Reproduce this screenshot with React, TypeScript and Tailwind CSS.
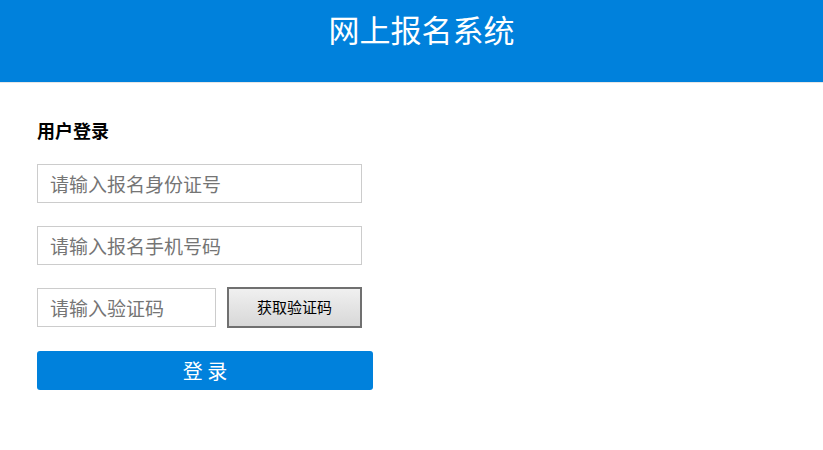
export default function App() {
  const font = { fontFamily: '"Microsoft YaHei", "Noto Sans CJK SC", "Liberation Sans", sans-serif' };
  return (
    <div className="w-[823px] h-[450px] bg-white" style={font}>
      <div className="h-[83px] bg-[#0081dc] border-b border-[#e6e6e6] flex justify-center pl-[20px]">
        <h1 className="text-white text-[31px] leading-none pt-[13px] font-normal">网上报名系统</h1>
      </div>
      <div className="pl-[37px] pt-[35px]">
        <div className="text-[18px] font-bold text-black leading-[24px]">用户登录</div>
        <div className="mt-[22px] flex flex-col gap-[23px]">
          <input
            className="w-[325px] h-[39px] border border-[#cccccc] px-[12px] text-[19px] text-black outline-none placeholder:text-[#757575]"
            placeholder="请输入报名身份证号"
          />
          <input
            className="w-[325px] h-[39px] border border-[#cccccc] px-[12px] text-[19px] text-black outline-none placeholder:text-[#757575]"
            placeholder="请输入报名手机号码"
          />
          <div className="flex items-start gap-[11px]">
            <input
              className="w-[179px] h-[39px] border border-[#cccccc] px-[12px] text-[19px] text-black outline-none placeholder:text-[#757575]"
              placeholder="请输入验证码"
            />
            <button className="w-[135px] h-[41px] -mt-[1px] border-2 border-[#707070] bg-gradient-to-b from-[#f0f0f0] to-[#d8d8d8] text-[15px] text-black">
              获取验证码
            </button>
          </div>
        </div>
        <button className="mt-[23px] w-[336px] h-[39px] bg-[#0081dc] rounded-[3px] text-white text-[20px]">
          登 录
        </button>
      </div>
    </div>
  );
}
